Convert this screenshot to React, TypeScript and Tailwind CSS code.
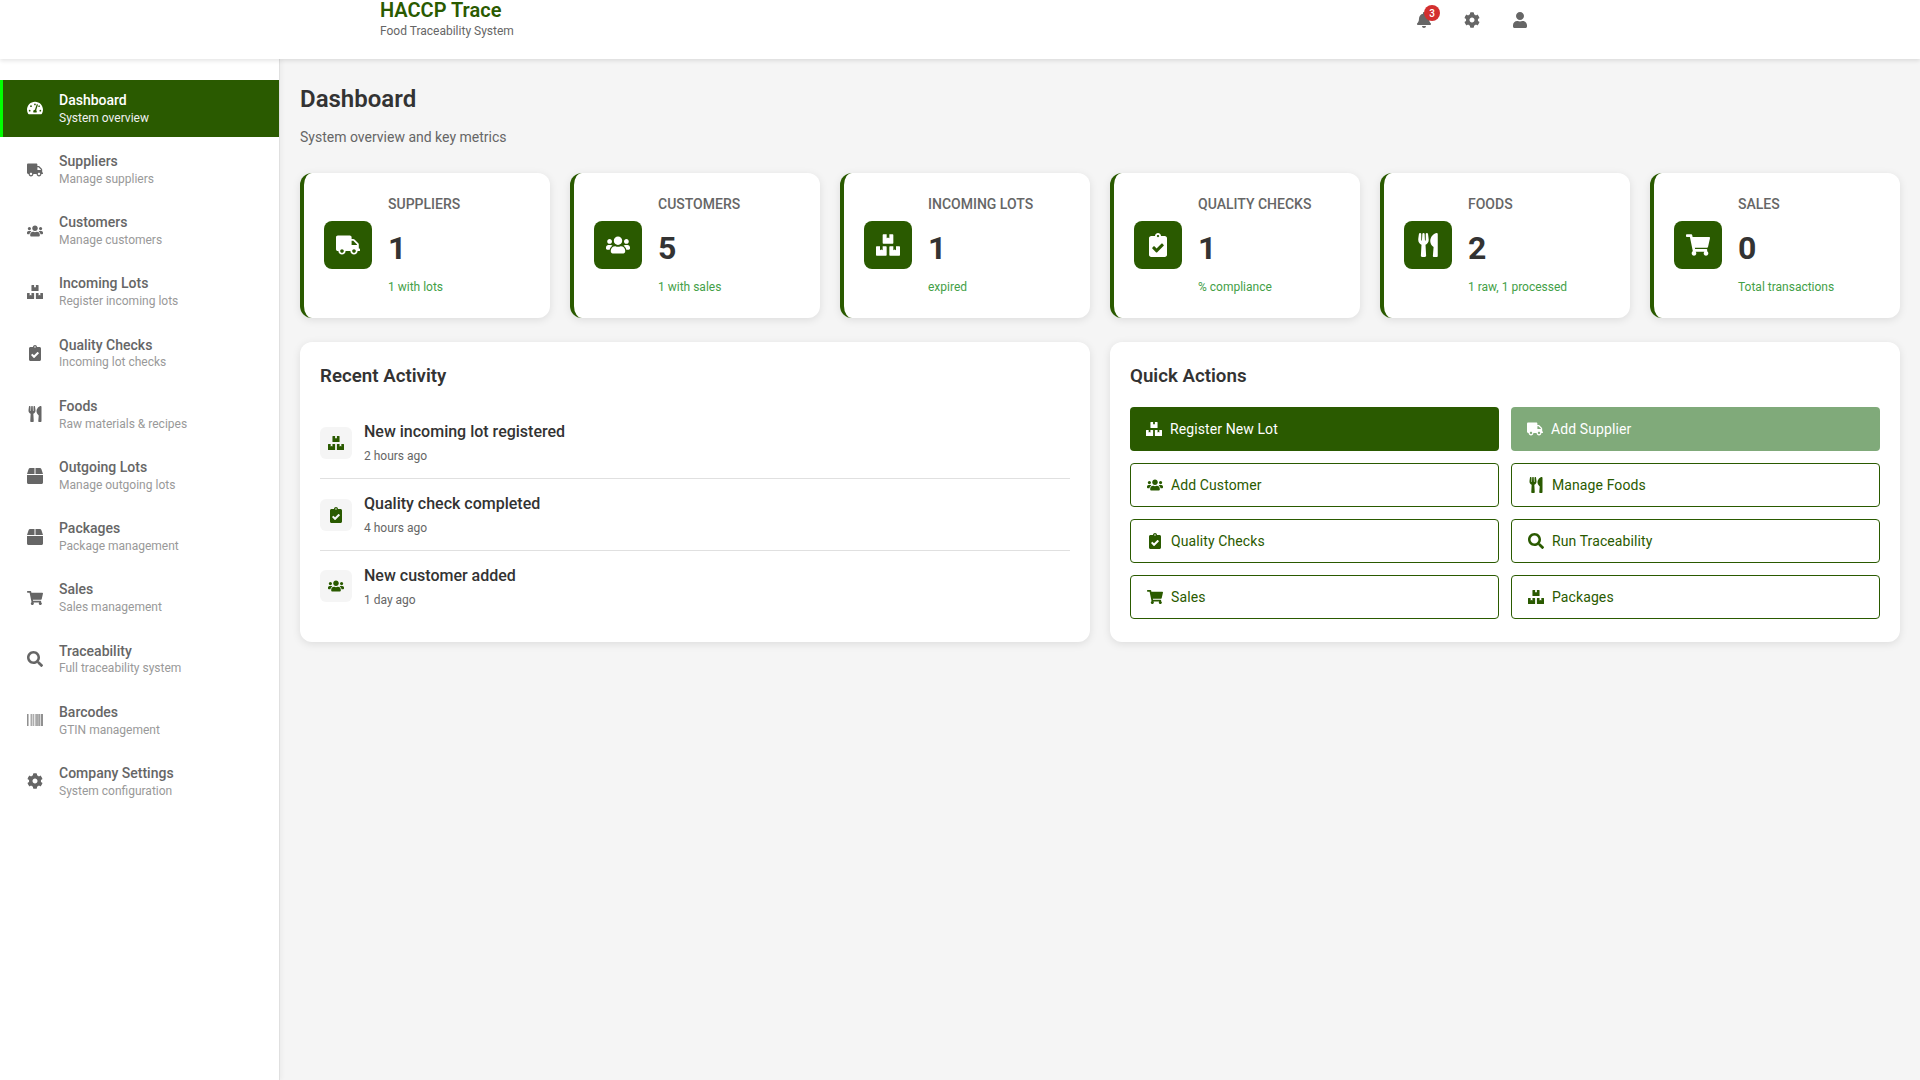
import type { ReactNode } from "react";
import {
  FaBarcode,
  FaBell,
  FaBox,
  FaBoxes,
  FaClipboardCheck,
  FaCog,
  FaSearch,
  FaShoppingCart,
  FaTachometerAlt,
  FaTruck,
  FaUser,
  FaUsers,
  FaUtensils,
} from "react-icons/fa";

const navItems = [
  { icon: FaTachometerAlt, title: "Dashboard", sub: "System overview" },
  { icon: FaTruck, title: "Suppliers", sub: "Manage suppliers" },
  { icon: FaUsers, title: "Customers", sub: "Manage customers" },
  { icon: FaBoxes, title: "Incoming Lots", sub: "Register incoming lots" },
  { icon: FaClipboardCheck, title: "Quality Checks", sub: "Incoming lot checks" },
  { icon: FaUtensils, title: "Foods", sub: "Raw materials & recipes" },
  { icon: FaBox, title: "Outgoing Lots", sub: "Manage outgoing lots" },
  { icon: FaBox, title: "Packages", sub: "Package management" },
  { icon: FaShoppingCart, title: "Sales", sub: "Sales management" },
  { icon: FaSearch, title: "Traceability", sub: "Full traceability system" },
  { icon: FaBarcode, title: "Barcodes", sub: "GTIN management" },
  { icon: FaCog, title: "Company Settings", sub: "System configuration" },
];

const stats = [
  { icon: FaTruck, label: "Suppliers", value: "1", note: "1 with lots" },
  { icon: FaUsers, label: "Customers", value: "5", note: "1 with sales" },
  { icon: FaBoxes, label: "Incoming Lots", value: "1", note: "expired" },
  { icon: FaClipboardCheck, label: "Quality Checks", value: "1", note: "% compliance" },
  { icon: FaUtensils, label: "Foods", value: "2", note: "1 raw, 1 processed" },
  { icon: FaShoppingCart, label: "Sales", value: "0", note: "Total transactions" },
];

const activity = [
  { icon: FaBoxes, title: "New incoming lot registered", time: "2 hours ago" },
  { icon: FaClipboardCheck, title: "Quality check completed", time: "4 hours ago" },
  { icon: FaUsers, title: "New customer added", time: "1 day ago" },
];

const actions = [
  { icon: FaUsers, label: "Add Customer" },
  { icon: FaUtensils, label: "Manage Foods" },
  { icon: FaClipboardCheck, label: "Quality Checks" },
  { icon: FaSearch, label: "Run Traceability" },
  { icon: FaShoppingCart, label: "Sales" },
  { icon: FaBoxes, label: "Packages" },
];

function HeaderIcon({ children }: { children: ReactNode }) {
  return <button className="relative flex h-10 w-10 items-center justify-center text-[#666666]">{children}</button>;
}

function Header() {
  return (
    <header className="relative z-10 h-[59px] shrink-0 bg-white shadow-[0_2px_4px_rgba(0,0,0,0.1)]">
      <div className="mx-auto flex h-10 w-[1160px] items-start justify-between">
        <div>
          <div className="text-[20px] leading-[20px] font-semibold text-[#2a5a00]">HACCP Trace</div>
          <div className="mt-[3px] text-[12px] leading-4 text-[#666666]">Food Traceability System</div>
        </div>
        <div className="flex gap-2">
          <HeaderIcon>
            <FaBell size={16} />
            <span className="absolute top-[5px] left-[20px] flex h-4 min-w-4 items-center justify-center rounded-full bg-[#d32f2f] text-[10px] font-medium text-white">3</span>
          </HeaderIcon>
          <HeaderIcon><FaCog size={16} /></HeaderIcon>
          <HeaderIcon><FaUser size={16} /></HeaderIcon>
        </div>
      </div>
    </header>
  );
}

function Sidebar() {
  return (
    <aside className="w-[280px] shrink-0 border-r border-[#e0e0e0] bg-white pt-[21.4px] shadow-[2px_0_4px_rgba(0,0,0,0.04)]">
      {navItems.map((item, i) => {
        const Icon = item.icon;
        const active = i === 0;
        return (
          <div
            key={item.title}
            className={`mb-[4.2px] flex h-[57px] items-center gap-4 border-l-[3px] pl-6 ${active ? "border-[#00ff00] bg-[#2a5a00]" : "border-transparent"}`}
          >
            <span className={`flex w-4 justify-center pb-px ${active ? "text-white" : "text-[#666666]"}`}><Icon size={16} /></span>
            <div>
              <div className={`text-[14px] leading-[18px] font-medium ${active ? "text-white" : "text-[#666666]"}`}>{item.title}</div>
              <div className={`-mt-[0.2px] -mb-[0.2px] text-[12px] leading-[18.4px] ${active ? "text-[#f0f0f0]" : "text-[#999999]"}`}>{item.sub}</div>
            </div>
          </div>
        );
      })}
    </aside>
  );
}

function StatCard({ icon: Icon, label, value, note }: (typeof stats)[number]) {
  return (
    <div className="flex h-[145px] items-center gap-4 rounded-xl border-l-4 border-[#2a5a00] bg-white pb-px pl-5 shadow-[0_2px_8px_rgba(0,0,0,0.1)]">
      <div className="flex h-12 w-12 items-center justify-center rounded-lg bg-[#2a5a00] text-white"><Icon size={24} /></div>
      <div className="pb-px">
        <div className="text-[14px] leading-5 font-medium text-[#666666] uppercase">{label}</div>
        <div className="mt-[15px] text-[32px] leading-[38px] font-bold text-[#333333]">{value}</div>
        <div className="mt-3 text-[12px] leading-4 text-[#43a047]">{note}</div>
      </div>
    </div>
  );
}

function Panel({ title, children }: { title: string; children: ReactNode }) {
  return (
    <section className="rounded-xl bg-white p-5 shadow-[0_2px_8px_rgba(0,0,0,0.1)]">
      <h2 className="mb-[17px] pt-px text-[18.72px] leading-[27px] font-semibold text-[#333333]">{title}</h2>
      {children}
    </section>
  );
}

export default function App() {
  return (
    <div className="flex h-screen flex-col overflow-hidden bg-[#f5f5f5] font-['Roboto',sans-serif]">
      <Header />
      <div className="flex min-h-0 flex-1">
        <Sidebar />
        <main className="flex-1 px-5 pt-5">
          <h1 className="text-[24px] leading-10 font-semibold text-[#333333]">Dashboard</h1>
          <p className="mt-2 mb-[26px] text-[14px] leading-5 text-[#666666]">System overview and key metrics</p>

          <div className="grid grid-cols-6 gap-5">
            {stats.map((s) => <StatCard key={s.label} {...s} />)}
          </div>

          <div className="mt-6 grid grid-cols-2 gap-5">
            <Panel title="Recent Activity">
              {activity.map((a, i) => {
                const Icon = a.icon;
                return (
                  <div key={a.title} className={`flex items-center gap-3 ${i < 2 ? "h-[72px] border-b border-[#e0e0e0]" : "mb-px h-[70px]"}`}>
                    <div className="flex h-8 w-8 items-center justify-center rounded-md bg-[#f5f5f5] text-[#2a5a00]"><Icon size={16} /></div>
                    <div className="pb-px">
                      <div className="text-[16px] leading-6 font-medium text-[#333333]">{a.title}</div>
                      <div className="mt-1 text-[12px] leading-4 text-[#666666]">{a.time}</div>
                    </div>
                  </div>
                );
              })}
            </Panel>

            <Panel title="Quick Actions">
              <div className="grid grid-cols-2 gap-3">
                <button className="flex h-11 items-center gap-2 rounded bg-[#2a5a00] pl-4 text-[14px] tracking-[0.1px] text-white">
                  <span className="flex w-4 justify-center"><FaBoxes size={16} /></span>Register New Lot
                </button>
                <button className="flex h-11 items-center gap-2 rounded bg-[#80aa7a] pl-4 text-[14px] tracking-[0.1px] text-white">
                  <span className="flex w-4 justify-center"><FaTruck size={16} /></span>Add Supplier
                </button>
                {actions.map((a) => {
                  const Icon = a.icon;
                  return (
                    <button key={a.label} className="flex h-11 items-center gap-2 rounded border border-[#2a5a00] bg-white pl-4 text-[14px] tracking-[0.1px] text-[#2a5a00]">
                      <span className="flex w-4 justify-center"><Icon size={16} /></span>{a.label}
                    </button>
                  );
                })}
              </div>
            </Panel>
          </div>
        </main>
      </div>
    </div>
  );
}
